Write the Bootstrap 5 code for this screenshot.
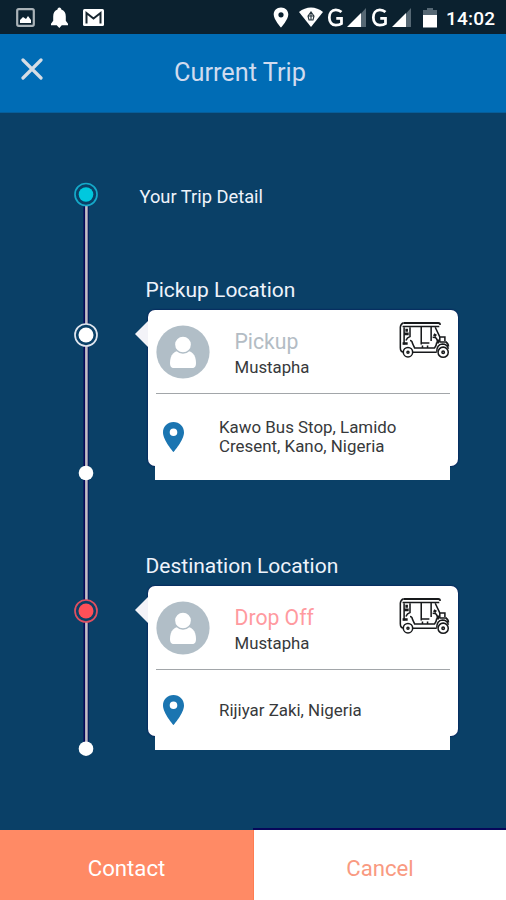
<!DOCTYPE html>
<html lang="en">
<head>
<meta charset="utf-8">
<meta name="viewport" content="width=device-width, initial-scale=1">
<title>Current Trip</title>
<link href="https://cdn.jsdelivr.net/npm/bootstrap@5.3.0/dist/css/bootstrap.min.css" rel="stylesheet">
<style>
body{font-family:Roboto,"Liberation Sans",sans-serif;background:#0a4067;height:900px;overflow:hidden}
svg{display:block;flex-shrink:0}
.status{height:34px;background:#0b212f}
.radios{margin-left:-3px}
.clock{font-size:19px;font-weight:500;line-height:37px;letter-spacing:.2px;margin-left:9px}
.topbar{display:grid!important;grid-template-columns:64px 1fr;height:79px;background:#006cb5;border-bottom:1px solid #075e9a}
.close-btn{width:64px;height:70px;padding:0 0 0 21px;border:0;background:none}
.page-title{font-size:25.3px;line-height:77px;color:#cfdbef;font-weight:400;padding-left:110px}
.trip{height:717px;padding:69px 0 0 74px}
.stops{padding:1px 0 0 37px}
.intro{font-size:18.3px;line-height:28px;height:79px;margin-left:4.5px;color:#eef3fb}
.stop{height:276px}
.stop-title{font-size:21px;line-height:30px;height:48px;padding-top:13px;margin-left:10.5px;font-weight:400;color:#eef3fb}
.ticket{width:310px;margin-left:13px;padding:0 8px;border:0;border-radius:7px;box-shadow:0 0 2px #000050}
.ticket.tall{height:156px}
.ticket.low{height:150px}
.ticket:before{content:"";position:absolute;left:-13px;top:11px;border:13px solid transparent;border-left:0;border-right-color:#f3f3f8}
.who{height:83px;padding-top:15px;flex-shrink:0}
.tuk{margin:-4px 0 0 0}
.rule{height:1px;background:#a2a6a9;width:294px;flex-shrink:0}
.kind{font-size:21.2px;line-height:26px;padding-top:4px;margin-left:.5px;color:#b3bcc4}
.kind.drop{color:#ff9a9f}
.person{font-size:16.8px;line-height:24px;margin-left:.5px;color:#37393b}
.where{font-size:16.9px;line-height:19px;color:#37393b;margin-left:35px;padding-top:1px}
.place{height:85px;padding-left:7px;flex-shrink:0;position:relative;z-index:2}
.low .place{height:79px}
.stub{width:295px;height:16px;margin:-2px 0 0 20px;background:#fff;position:relative}
.actions{height:70px}
.actions .btn{border:0;border-radius:0;font-size:22.2px;padding:8px 0 0;width:253px}
.contact{background:#ff8a65!important;color:#fff!important}
.cancel{background:#fff!important;color:#f99a81!important;border-left:1px solid #ff7d52!important;box-shadow:0 -2px 0 #07075a}
</style>
</head>
<body>
<svg width="0" height="0" class="position-absolute" aria-hidden="true"><defs>
<symbol id="pin" viewBox="0 0 21 30"><path fill="#1b75b1" fill-rule="evenodd" d="M10.5 0C4.6 0 0 4.6 0 10.4 0 18 10.5 30 10.5 30S21 18 21 10.4C21 4.6 16.4 0 10.5 0Zm0 6.4a3.8 3.8 0 1 1 0 7.6 3.8 3.8 0 0 1 0-7.6Z"/></symbol>
<symbol id="face" viewBox="0 0 54 54"><circle cx="27" cy="27" r="26.6" fill="#b1bec7"/><path fill="#fff" d="M27 25c9 0 13 5 13 13 0 3-1 5-4 5H18c-3 0-4-2-4-5 0-8 4-13 13-13Z"/><circle cx="27" cy="19.5" r="8.6" fill="#fff" stroke="#b1bec7" stroke-width="1.5"/></symbol>
<symbol id="tukart" viewBox="0 0 50 38"><g fill="none" stroke="#17191b" stroke-width="1.5"><path stroke-width="2" d="M4.5 1.8h34q1.8 0 1.6 1.8"/><path d="M4.5 1.5Q1.5 2.5 1.3 6v20q0 4 3 4.2"/><path d="M3.5 5.2h36" stroke-width="1.4"/><path d="M5 6v17M10.8 6v9q-3 1-4 4M10.8 19q2 0 2.5 3l2 4.3h19.5q1.8-2 2.2-5.5M21.8 5v18M31.5 5.5v14M35.5 6l4.5 9.5M33 16q3-1 4.5 2.5M13.5 30.5h23.5M21.8 21.5h8M23 24v2M28 24v2"/><path stroke-width="2.5" d="M7.5 7.5v3M5 12.5h4.5M3.5 22h5M34 13l2.5 1.5M38 18v4"/><path d="M40 20.5v-5h5v4M39.5 20.5h7.5M37 30q0-7 5.5-7.5 4.5 0 6 4.5M46 20.5q2.5 1.5 2.5 4.5"/><circle cx="8.8" cy="30.5" r="4.6"/><circle cx="43.3" cy="30.5" r="5"/><circle cx="8.8" cy="30.5" r="1"/><circle cx="43.3" cy="30.5" r="1.2"/></g></symbol>
<symbol id="signal" viewBox="0 0 21 20"><path fill="#566874" d="M15 5.5 20 0v19h-5z"/><path fill="#fff" d="M1 19 15 5v14z"/></symbol>
<symbol id="gsm" viewBox="0 0 17 20"><path fill="none" stroke="#fff" stroke-width="2.9" d="M14.8 4.3C13 2.7 10.8 2 8.8 2 4.5 2 2 5.3 2 10.1s2.7 7.9 6.8 7.9c2.4 0 4.6-.5 6-1.6v-5.6H9.3"/></symbol>
</defs></svg>

<header>
  <div class="status d-flex text-white">
    <svg width="253" height="34"><g><rect x="17.2" y="9.2" width="16.6" height="16.6" rx="1.5" fill="none" stroke="#aab3b8" stroke-width="2.2"/><path fill="#fff" d="m20 23v-3l3-3 3 2 2-3 3 4v3z"/>
      <path fill="#fff" d="M59.3 7.5c1.3 0 2 1 2 2 3 1 4.5 3.5 4.5 7v4.2l2.2 3.1v1.5H51v-1.5l2.2-3.1v-4.2c0-3.5 1.5-6 4.3-7 0-1 .7-2 1.8-2ZM56.5 25h5.5l-2.7 3z"/>
      <rect x="83" y="9" width="21" height="17" rx="1.5" fill="#fff"/><path fill="none" stroke="#18262f" stroke-width="2" d="M86.5 23.5V13l7 5.5 7-5.5v10.5"/></g></svg>
    <svg width="77" height="34" viewBox="253 0 77 34"><path fill="#fff" fill-rule="evenodd" d="M281 7.5c-4.4 0-7.3 3-7.3 7 0 5 7.3 13 7.3 13s7.3-8 7.3-13c0-4-2.9-7-7.3-7Zm0 4.7a2.6 2.6 0 1 1 0 5.2 2.6 2.6 0 0 1 0-5.2Z"/><path fill="#fff" d="M299 12c7-6 17-6 24 0l-12 15z"/><path fill="none" stroke="#26353e" stroke-width="1.1" d="m308 16 3-4 3 4-1 4h-4zM308 16h6M311 12v8"/></svg>
    <div class="radios d-flex align-items-start pt-2">
      <svg width="17" height="19"><use href="#gsm"/></svg>
      <svg width="21" height="20" style="margin-left:2px"><use href="#signal"/></svg>
      <svg width="17" height="19" class="ms-1"><use href="#gsm"/></svg>
      <svg width="21" height="20" style="margin-left:3px"><use href="#signal"/></svg>
      <svg width="14" height="20" style="margin-left:11px"><path fill="#566874" d="M4 0h6v2h4v5H0V2h4z"/><path fill="#fff" d="M0 7h14v12.5H0z"/></svg>
    </div>
    <span class="clock">14:02</span>
  </div>
  <nav class="topbar">
    <button class="close-btn d-flex align-items-center" aria-label="Close"><svg width="22" height="22"><path fill="none" stroke="#d5dde5" stroke-width="3.2" stroke-linecap="round" d="m2 2 18 18M20 2 2 20"/></svg></button>
    <h1 class="page-title m-0">Current Trip</h1>
  </nav>
</header>

<main class="trip d-flex">
  <svg width="24" height="576"><path stroke="#07075a" stroke-width="5" d="M12 22v544"/><path stroke="#c4bfc6" stroke-width="2.6" d="M12.4 14v552"/>
    <circle cx="12" cy="12.5" r="11" fill="#0a4067" stroke="#15a9c9" stroke-width="1.7"/><circle cx="12" cy="12.5" r="7.3" fill="#00c8de"/>
    <circle cx="12" cy="153" r="11" fill="#0a4067" stroke="#e0e6ef" stroke-width="1.7"/><circle cx="12" cy="153" r="7.5" fill="#fff"/>
    <circle cx="12" cy="291" r="7.3" fill="#fff"/>
    <circle cx="12" cy="429" r="11" fill="#0a4067" stroke="#df4f60" stroke-width="1.7"/><circle cx="12" cy="429" r="7.5" fill="#ff5058"/>
    <circle cx="12" cy="566.7" r="7.3" fill="#fff"/></svg>
  <div class="stops">
    <div class="intro">Your Trip Detail</div>
    <section class="stop">
      <h2 class="stop-title mb-0">Pickup Location</h2>
      <div class="ticket card tall">
        <div class="who d-flex">
          <svg width="54" height="54"><use href="#face"/></svg>
          <div class="ms-4 flex-grow-1"><div class="kind">Pickup</div><div class="person">Mustapha</div></div>
          <svg class="tuk" width="51" height="39"><use href="#tukart"/></svg>
        </div>
        <div class="rule"></div>
        <div class="place d-flex align-items-center"><svg width="21" height="30"><use href="#pin"/></svg><div class="where">Kawo Bus Stop, Lamido<br>Cresent, Kano, Nigeria</div></div>
      </div>
      <div class="stub"></div>
    </section>
    <section class="stop">
      <h2 class="stop-title mb-0">Destination Location</h2>
      <div class="ticket card low">
        <div class="who d-flex">
          <svg width="54" height="54"><use href="#face"/></svg>
          <div class="ms-4 flex-grow-1"><div class="kind drop">Drop Off</div><div class="person">Mustapha</div></div>
          <svg class="tuk" width="51" height="39"><use href="#tukart"/></svg>
        </div>
        <div class="rule"></div>
        <div class="place d-flex align-items-center"><svg width="21" height="30"><use href="#pin"/></svg><div class="where">Rijiyar Zaki, Nigeria</div></div>
      </div>
      <div class="stub"></div>
    </section>
  </div>
</main>
<footer class="actions d-flex">
  <button class="btn contact">Contact</button>
  <button class="btn cancel">Cancel</button>
</footer>
<script src="https://cdn.jsdelivr.net/npm/bootstrap@5.3.0/dist/js/bootstrap.bundle.min.js"></script>
</body>
</html>
